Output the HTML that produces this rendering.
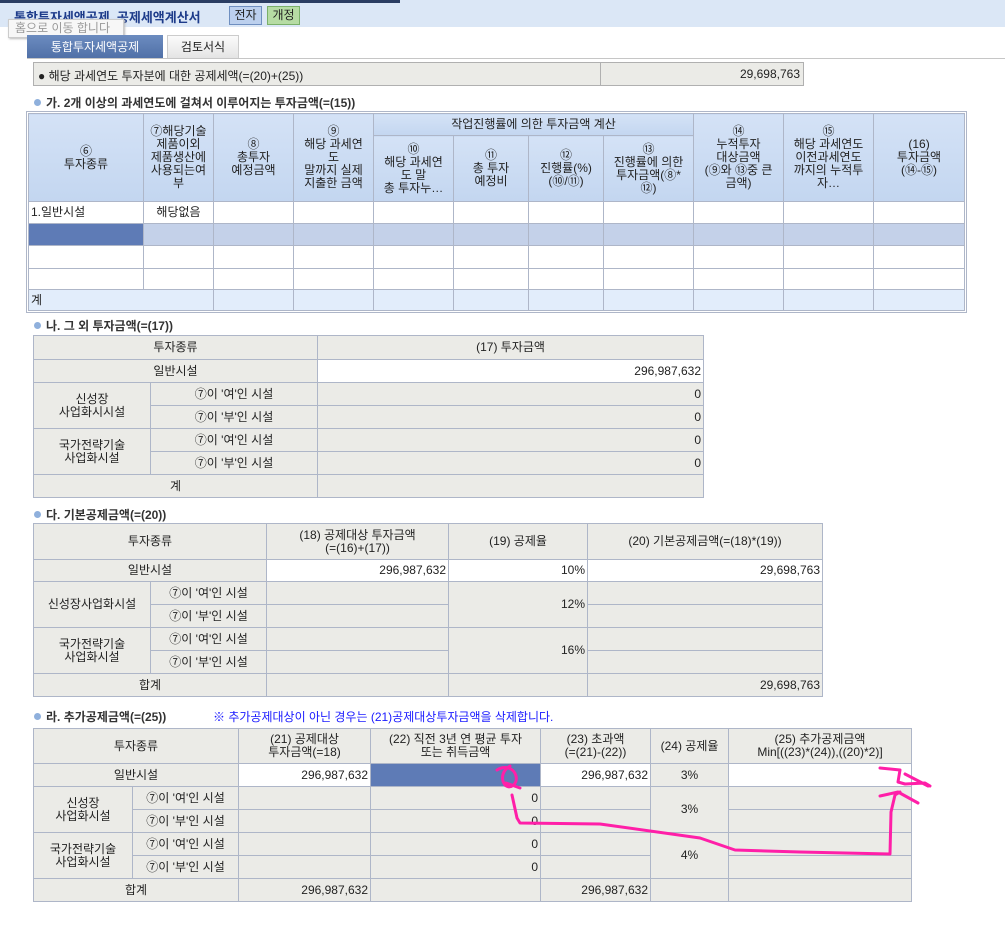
<!DOCTYPE html>
<html><head><meta charset="utf-8">
<style>
*{margin:0;padding:0;box-sizing:border-box}
body{width:1005px;height:940px;background:#fff;position:relative;overflow:hidden;font-family:"Liberation Sans","Noto Sans CJK KR",sans-serif;font-size:12px;color:#222}
.abs{position:absolute}
table{position:absolute;border-collapse:collapse;table-layout:fixed}
td{border:1px solid #aeb6c8;text-align:center;vertical-align:middle;line-height:13px;font-size:12px;padding:0 2px;overflow:hidden;white-space:normal}
.g td{background:#ebebe7}
td.w{background:#fff!important}
td.r{text-align:right}
td.l{text-align:left}
td.b{background:#5e7bb6!important}
.t1 td{background:#fff}
.t1 tr.h td{background:linear-gradient(#d4e2f6,#c3d6f0)}
.t1 tr.s td{background:#c4d1e9}
.t1 tr.k td{background:#e2edfb}
.sec{position:absolute;font-size:12px;font-weight:bold;color:#333;left:34px}
.sec:before{content:"";display:inline-block;width:7px;height:7px;border-radius:50%;background:#8fb0dc;margin-right:5px;vertical-align:1px}
</style></head><body>
<div class="abs" style="left:0;top:0;width:1005px;height:27px;background:#dbe7f6"></div>
<div class="abs" style="left:0;top:0;width:400px;height:3px;background:#2a3d62"></div>
<div class="abs" style="left:14px;top:7px;font-size:13px;font-weight:bold;color:#1d3b8a;letter-spacing:0px">통합투자세액공제 &nbsp;공제세액계산서</div>
<div class="abs" style="left:229px;top:6px;width:33px;height:19px;border:1px solid #6f8fc0;background:#bcd0ee;text-align:center;line-height:17px;font-size:12px">전자</div>
<div class="abs" style="left:267px;top:6px;width:33px;height:19px;border:1px solid #7ab06a;background:#b6dca4;text-align:center;line-height:17px;font-size:12px">개정</div>
<div class="abs" style="left:8px;top:19px;width:116px;height:19px;border:1px solid #ccc;background:#f7f7f7;color:#999;font-size:12px;line-height:17px;padding-left:6px;box-shadow:1px 1px 2px #bbb">홈으로 이동 합니다</div>
<div class="abs" style="left:27px;top:35px;width:136px;height:24px;background:linear-gradient(#6c8cc0,#4f6fa6);color:#fff;text-align:center;line-height:24px">통합투자세액공제</div>
<div class="abs" style="left:167px;top:35px;width:72px;height:24px;background:linear-gradient(#fbfbfb,#e4e4e4);border:1px solid #ccc;text-align:center;line-height:22px">검토서식</div>
<div class="abs" style="left:27px;top:58px;width:978px;height:1px;background:#c6c6c6"></div>
<div class="abs" style="left:33px;top:62px;width:771px;height:24px;border:1px solid #b0b0b0;background:#ebebe7"></div>
<div class="abs" style="left:600px;top:62px;width:1px;height:24px;background:#b0b0b0"></div>
<div class="abs" style="left:38px;top:67px">● 해당 과세연도 투자분에 대한 공제세액(=(20)+(25))</div>
<div class="abs" style="left:600px;top:67px;width:200px;text-align:right">29,698,763</div>

<div class="sec" style="top:94px">가. 2개 이상의 과세연도에 걸쳐서 이루어지는 투자금액(=(15))</div>
<table class="t1" style="left:28px;top:113px;width:936px;outline:1px solid #aeb6c8;outline-offset:1px">
<colgroup><col style="width:115px"><col style="width:70px"><col style="width:80px"><col style="width:80px"><col style="width:80px"><col style="width:75px"><col style="width:75px"><col style="width:90px"><col style="width:90px"><col style="width:90px"><col style="width:91px"></colgroup>
<tr class="h" style="height:22px"><td rowspan="2">⑥<br>투자종류</td><td rowspan="2">⑦해당기술<br>제품이외<br>제품생산에<br>사용되는여<br>부</td><td rowspan="2">⑧<br>총투자<br>예정금액</td><td rowspan="2">⑨<br>해당 과세연<br>도<br>말까지 실제<br>지출한 금액</td><td colspan="4">작업진행률에 의한 투자금액 계산</td><td rowspan="2">⑭<br>누적투자<br>대상금액<br>(⑨와 ⑬중 큰<br>금액)</td><td rowspan="2">⑮<br>해당 과세연도<br>이전과세연도<br>까지의 누적투<br>자…</td><td rowspan="2">(16)<br>투자금액<br>(⑭-⑮)</td></tr>
<tr class="h" style="height:66px"><td>⑩<br>해당 과세연<br>도 말<br>총 투자누…</td><td>⑪<br>총 투자<br>예정비</td><td>⑫<br>진행률(%)<br>(⑩/⑪)</td><td>⑬<br>진행률에 의한<br>투자금액(⑧*<br>⑫)</td></tr>
<tr style="height:22px"><td class="l">1.일반시설</td><td>해당없음</td><td></td><td></td><td></td><td></td><td></td><td></td><td></td><td></td><td></td></tr>
<tr class="s" style="height:22px"><td class="b"></td><td></td><td></td><td></td><td></td><td></td><td></td><td></td><td></td><td></td><td></td></tr>
<tr style="height:23px"><td></td><td></td><td></td><td></td><td></td><td></td><td></td><td></td><td></td><td></td><td></td></tr>
<tr style="height:21px"><td></td><td></td><td></td><td></td><td></td><td></td><td></td><td></td><td></td><td></td><td></td></tr>
<tr class="k" style="height:21px"><td colspan="2" class="l">계</td><td></td><td></td><td></td><td></td><td></td><td></td><td></td><td></td><td></td></tr>
</table>

<div class="sec" style="top:317px">나. 그 외 투자금액(=(17))</div>
<table class="g" style="left:33px;top:335px;width:670px">
<colgroup><col style="width:117px"><col style="width:167px"><col style="width:386px"></colgroup>
<tr style="height:24px"><td colspan="2">투자종류</td><td>(17) 투자금액</td></tr>
<tr style="height:23px"><td colspan="2">일반시설</td><td class="w r">296,987,632</td></tr>
<tr style="height:23px"><td rowspan="2">신성장<br>사업화시시설</td><td>⑦이 '여'인 시설</td><td class="r">0</td></tr>
<tr style="height:23px"><td>⑦이 '부'인 시설</td><td class="r">0</td></tr>
<tr style="height:23px"><td rowspan="2">국가전략기술<br>사업화시설</td><td>⑦이 '여'인 시설</td><td class="r">0</td></tr>
<tr style="height:23px"><td>⑦이 '부'인 시설</td><td class="r">0</td></tr>
<tr style="height:23px"><td colspan="2">계</td><td></td></tr>
</table>

<div class="sec" style="top:506px">다. 기본공제금액(=(20))</div>
<table class="g" style="left:33px;top:523px;width:789px">
<colgroup><col style="width:117px"><col style="width:116px"><col style="width:182px"><col style="width:139px"><col style="width:235px"></colgroup>
<tr style="height:36px"><td colspan="2">투자종류</td><td>(18) 공제대상 투자금액<br>(=(16)+(17))</td><td>(19) 공제율</td><td>(20) 기본공제금액(=(18)*(19))</td></tr>
<tr style="height:22px"><td colspan="2">일반시설</td><td class="w r">296,987,632</td><td class="w r">10%</td><td class="w r">29,698,763</td></tr>
<tr style="height:23px"><td rowspan="2">신성장사업화시설</td><td>⑦이 '여'인 시설</td><td></td><td rowspan="2" class="r">12%</td><td></td></tr>
<tr style="height:23px"><td>⑦이 '부'인 시설</td><td></td><td></td></tr>
<tr style="height:23px"><td rowspan="2">국가전략기술<br>사업화시설</td><td>⑦이 '여'인 시설</td><td></td><td rowspan="2" class="r">16%</td><td></td></tr>
<tr style="height:23px"><td>⑦이 '부'인 시설</td><td></td><td></td></tr>
<tr style="height:23px"><td colspan="2">합계</td><td></td><td></td><td class="r">29,698,763</td></tr>
</table>

<div class="sec" style="top:708px">라. 추가공제금액(=(25))</div>
<div class="abs" style="left:213px;top:708px;color:#1a1aff">※ 추가공제대상이 아닌 경우는 (21)공제대상투자금액을 삭제합니다.</div>
<table class="g" style="left:33px;top:728px;width:878px">
<colgroup><col style="width:99px"><col style="width:106px"><col style="width:132px"><col style="width:170px"><col style="width:110px"><col style="width:78px"><col style="width:183px"></colgroup>
<tr style="height:35px"><td colspan="2">투자종류</td><td>(21) 공제대상<br>투자금액(=18)</td><td>(22) 직전 3년 연 평균 투자<br>또는 취득금액</td><td>(23) 초과액<br>(=(21)-(22))</td><td>(24) 공제율</td><td>(25) 추가공제금액<br>Min[((23)*(24)),((20)*2)]</td></tr>
<tr style="height:23px"><td colspan="2">일반시설</td><td class="w r">296,987,632</td><td class="b"></td><td class="w r">296,987,632</td><td>3%</td><td class="w"></td></tr>
<tr style="height:23px"><td rowspan="2">신성장<br>사업화시설</td><td>⑦이 '여'인 시설</td><td></td><td class="r">0</td><td></td><td rowspan="2">3%</td><td></td></tr>
<tr style="height:23px"><td>⑦이 '부'인 시설</td><td></td><td class="r">0</td><td></td><td></td></tr>
<tr style="height:23px"><td rowspan="2">국가전략기술<br>사업화시설</td><td>⑦이 '여'인 시설</td><td></td><td class="r">0</td><td></td><td rowspan="2">4%</td><td></td></tr>
<tr style="height:23px"><td>⑦이 '부'인 시설</td><td></td><td class="r">0</td><td></td><td></td></tr>
<tr style="height:23px"><td colspan="2">합계</td><td class="r">296,987,632</td><td></td><td class="r">296,987,632</td><td></td><td></td></tr>
</table>

<svg class="abs" style="left:0;top:0" width="1005" height="940" fill="none" stroke="#ff1fa8" stroke-width="3" stroke-linecap="round" stroke-linejoin="round">
<path d="M497,770 C505,765 514,768 516,776 C518,784 510,790 505,785 C500,778 503,770 510,766 M506,783 L520,788"/>
<path d="M512,795 L517,818 L520,823 L600,824 L700,838 L735,850 L800,852 L890,854 L891,812 L895,795 L900,792"/>
<path d="M880,796 L898,792 L918,803"/>
<path d="M880,768 L900,770 L898,782 L905,784 L925,783 L930,786 M905,774 L928,786"/>
</svg>
</body></html>
